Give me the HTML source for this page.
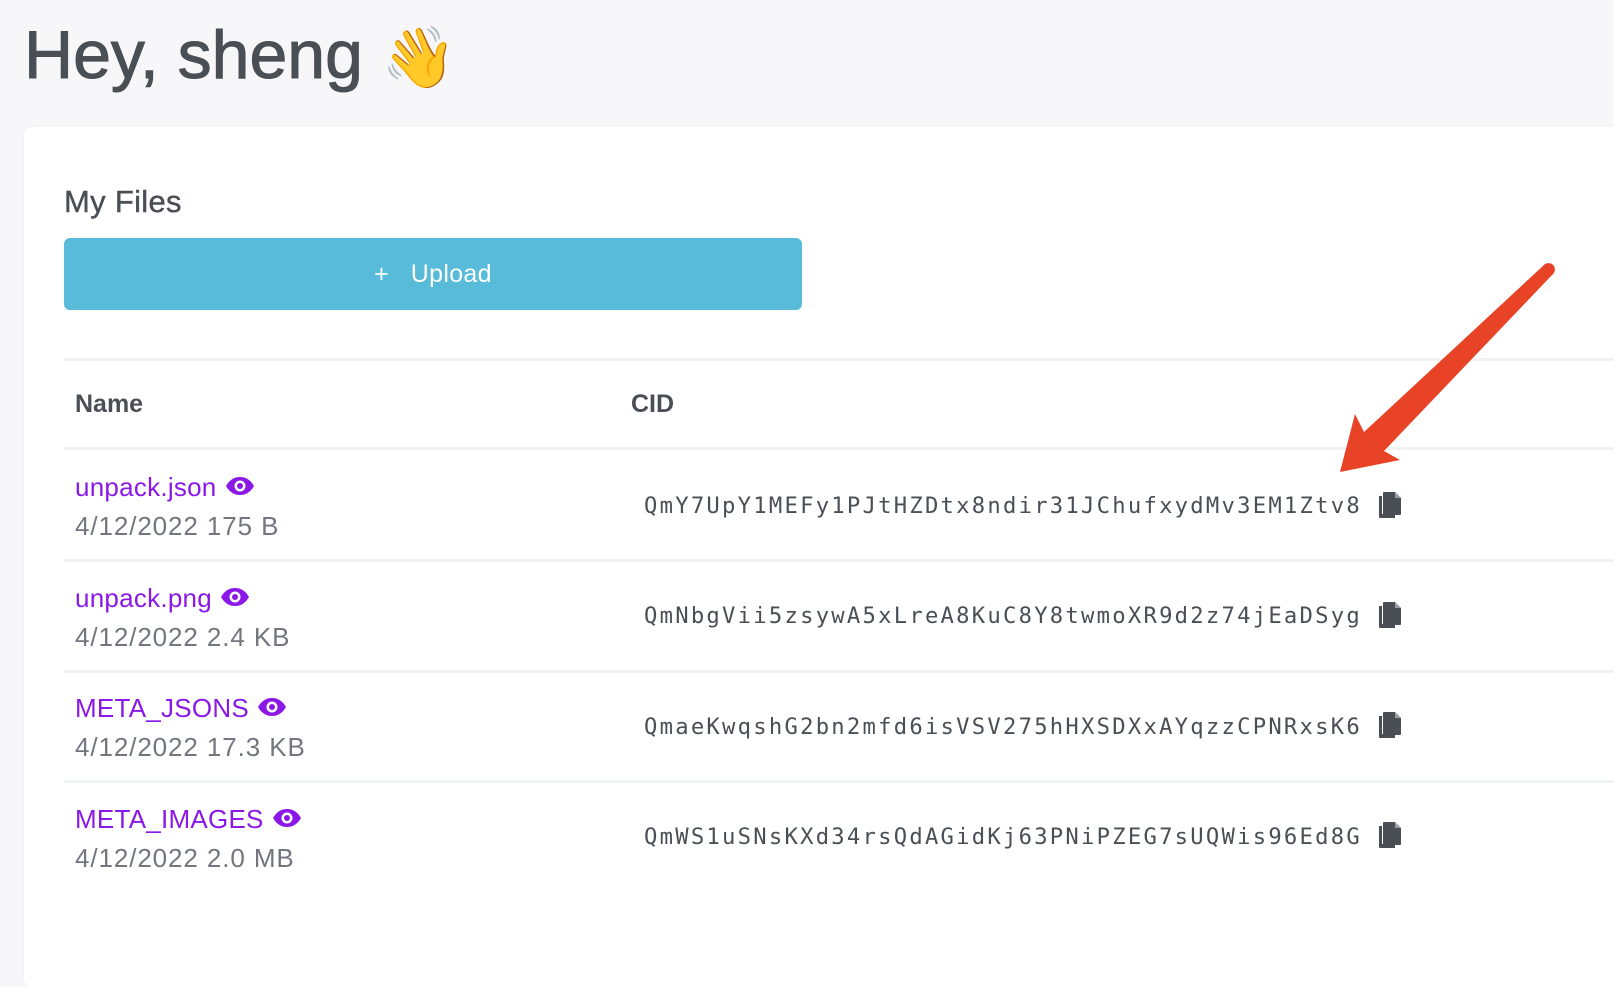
<!DOCTYPE html>
<html><head><meta charset="utf-8"><style>
*{margin:0;padding:0;box-sizing:border-box}
body{width:1614px;height:958px;background:#f7f7f9;font-family:"Liberation Sans",Arial,sans-serif;position:relative;overflow:hidden;color:#4a4e55}
h1{position:absolute;left:24px;top:16px;font-size:68px;font-weight:normal;color:#4a4e55;-webkit-text-stroke:1px #4a4e55}
.card{position:absolute;left:24px;top:127px;width:1620px;height:860px;background:#fff;border-radius:8px;box-shadow:0 0 6px rgba(0,0,0,0.03)}
.mf{position:absolute;left:64px;top:184px;font-size:31px;-webkit-text-stroke:0.4px #4a4e55;letter-spacing:0.3px}
.btn{position:absolute;left:64px;top:238px;width:738px;height:72px;background:#57bbd9;border-radius:6px;color:#fff;font-size:25px;text-align:center;line-height:72px;letter-spacing:0.3px}
.line{position:absolute;left:64px;width:1560px;height:3px;background:#f0f2f6}
.hd{position:absolute;top:390px;font-size:25px;font-weight:bold;color:#4a4e55}
.nm{position:absolute;left:75px;font-size:26px;letter-spacing:0.25px;color:#8a18e6}
.dt{position:absolute;left:75px;font-size:26px;letter-spacing:0.9px;color:#73767f}
.cid{position:absolute;left:644px;font-family:"DejaVu Sans Mono","Liberation Mono",monospace;font-size:22.2px;color:#4a4e55;letter-spacing:2.25px}
.eye{display:inline-block;vertical-align:middle;margin-left:8px;margin-top:-6px}
.cp{position:absolute;left:1378px}
</style></head><body>
<h1>Hey, sheng <span style="-webkit-text-stroke:0;font-family:'Noto Color Emoji',sans-serif;font-size:60px">👋</span></h1>
<div class="card"></div>
<div class="mf">My Files</div>
<div class="btn">+&nbsp;&nbsp; Upload</div>
<div class="line" style="top:358px"></div>
<div class="hd" style="left:75px">Name</div>
<div class="hd" style="left:631px">CID</div>
<div class="line" style="top:447px"></div>
<div class="line" style="top:559px"></div>
<div class="line" style="top:670px"></div>
<div class="line" style="top:780px"></div>

<div class="nm" style="top:472px">unpack.json<svg class="eye" width="30" height="20" viewBox="0 0 30 20"><path d="M1 10C5 3 10 1 15 1s10 2 14 9c-4 7-9 9-14 9S5 17 1 10z" fill="#8a18e6"/><circle cx="15" cy="10" r="5.5" fill="#fff"/><circle cx="15" cy="10" r="3" fill="#8a18e6"/></svg></div>
<div class="dt" style="top:511px">4/12/2022 175 B</div>
<div class="cid" style="top:493px">QmY7UpY1MEFy1PJtHZDtx8ndir31JChufxydMv3EM1Ztv8</div>

<div class="nm" style="top:583px">unpack.png<svg class="eye" width="30" height="20" viewBox="0 0 30 20"><path d="M1 10C5 3 10 1 15 1s10 2 14 9c-4 7-9 9-14 9S5 17 1 10z" fill="#8a18e6"/><circle cx="15" cy="10" r="5.5" fill="#fff"/><circle cx="15" cy="10" r="3" fill="#8a18e6"/></svg></div>
<div class="dt" style="top:622px">4/12/2022 2.4 KB</div>
<div class="cid" style="top:603px">QmNbgVii5zsywA5xLreA8KuC8Y8twmoXR9d2z74jEaDSyg</div>

<div class="nm" style="top:693px">META_JSONS<svg class="eye" width="30" height="20" viewBox="0 0 30 20"><path d="M1 10C5 3 10 1 15 1s10 2 14 9c-4 7-9 9-14 9S5 17 1 10z" fill="#8a18e6"/><circle cx="15" cy="10" r="5.5" fill="#fff"/><circle cx="15" cy="10" r="3" fill="#8a18e6"/></svg></div>
<div class="dt" style="top:732px">4/12/2022 17.3 KB</div>
<div class="cid" style="top:714px">QmaeKwqshG2bn2mfd6isVSV275hHXSDXxAYqzzCPNRxsK6</div>

<div class="nm" style="top:804px">META_IMAGES<svg class="eye" width="30" height="20" viewBox="0 0 30 20"><path d="M1 10C5 3 10 1 15 1s10 2 14 9c-4 7-9 9-14 9S5 17 1 10z" fill="#8a18e6"/><circle cx="15" cy="10" r="5.5" fill="#fff"/><circle cx="15" cy="10" r="3" fill="#8a18e6"/></svg></div>
<div class="dt" style="top:843px">4/12/2022 2.0 MB</div>
<div class="cid" style="top:824px">QmWS1uSNsKXd34rsQdAGidKj63PNiPZEG7sUQWis96Ed8G</div>

<svg class="cp" style="top:491px" width="24" height="28" viewBox="0 0 24 28"><path d="M1 5h3v18h13v4H2a1 1 0 0 1-1-1z" fill="#4a4e55"/><path d="M6 1h11l6 6v16a1 1 0 0 1-1 1H6a1 1 0 0 1-1-1V2a1 1 0 0 1 1-1z" fill="#4a4e55"/><path d="M17 1v6h6" fill="#9a9da3"/></svg>
<svg class="cp" style="top:601px" width="24" height="28" viewBox="0 0 24 28"><path d="M1 5h3v18h13v4H2a1 1 0 0 1-1-1z" fill="#4a4e55"/><path d="M6 1h11l6 6v16a1 1 0 0 1-1 1H6a1 1 0 0 1-1-1V2a1 1 0 0 1 1-1z" fill="#4a4e55"/><path d="M17 1v6h6" fill="#9a9da3"/></svg>
<svg class="cp" style="top:711px" width="24" height="28" viewBox="0 0 24 28"><path d="M1 5h3v18h13v4H2a1 1 0 0 1-1-1z" fill="#4a4e55"/><path d="M6 1h11l6 6v16a1 1 0 0 1-1 1H6a1 1 0 0 1-1-1V2a1 1 0 0 1 1-1z" fill="#4a4e55"/><path d="M17 1v6h6" fill="#9a9da3"/></svg>
<svg class="cp" style="top:821px" width="24" height="28" viewBox="0 0 24 28"><path d="M1 5h3v18h13v4H2a1 1 0 0 1-1-1z" fill="#4a4e55"/><path d="M6 1h11l6 6v16a1 1 0 0 1-1 1H6a1 1 0 0 1-1-1V2a1 1 0 0 1 1-1z" fill="#4a4e55"/><path d="M17 1v6h6" fill="#9a9da3"/></svg>

<svg style="position:absolute;left:0;top:0" width="1614" height="958"><polygon points="1544,265 1553,274 1384,451 1400,460 1340,472 1355,414 1364,432" fill="#e94327"/><circle cx="1548.5" cy="269.5" r="6.4" fill="#e94327"/></svg>
</body></html>
